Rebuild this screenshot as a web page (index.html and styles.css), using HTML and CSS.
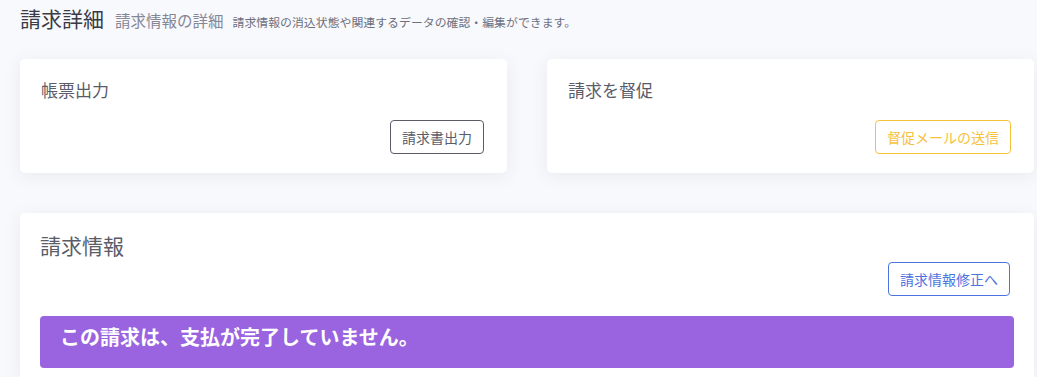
FILE: index.html
```html
<!DOCTYPE html>
<html lang="ja">

<head>
  <meta charset="UTF-8">
  <meta name="viewport" content="width=device-width, initial-scale=1.0">
  <title>請求詳細</title>
  <link rel="stylesheet" href="styles.css">
</head>

<body>
  <div class="page">
    <div class="page-head">
      <h1 class="page-title">請求詳細</h1>
      <span class="page-sub">請求情報の詳細</span>
      <span class="page-note">請求情報の消込状態や関連するデータの確認・編集ができます。</span>
    </div>

    <div class="card-row">
      <div class="card">
        <h5 class="card-title">帳票出力</h5>
        <div class="card-actions">
          <button class="btn btn-dark">請求書出力</button>
        </div>
      </div>
      <div class="card">
        <h5 class="card-title">請求を督促</h5>
        <div class="card-actions">
          <button class="btn btn-warning">督促メールの送信</button>
        </div>
      </div>
    </div>

    <div class="card card-main">
      <h4 class="card-title-lg">請求情報</h4>
      <div class="card-actions">
        <button class="btn btn-primary">請求情報修正へ</button>
      </div>
      <div class="alert-status">この請求は、支払が完了していません。</div>
    </div>
  </div>
</body>

</html>
```

FILE: styles.css
```css
body {
  margin: 0;
  font-family: "Noto Sans CJK JP", "Noto Sans", sans-serif;
  background-color: #f8f9fc;
  color: #5a5c69;
}

.page {
  padding: 0 3px 0 20px;
}

/* Header */
.page-head {
  display: flex;
  align-items: baseline;
  padding-top: 4px;
  height: 59px;
  box-sizing: border-box;
}

.page-title {
  margin: 0;
  font-size: 21px;
  font-weight: 400;
  color: #3a3b45;
  line-height: 28px;
}

.page-sub {
  margin-left: 11px;
  font-size: 15.5px;
  color: #858796;
}

.page-note {
  margin-left: 9px;
  font-size: 11.9px;
  color: #6e707e;
}

/* Cards */
.card-row {
  display: grid;
  grid-template-columns: 1fr 1fr;
  gap: 40px;
  margin-bottom: 40px;
}

.card {
  background-color: #fff;
  border-radius: 5px;
  box-shadow: 0 3px 18px 0 rgba(58, 59, 69, 0.08);
  padding: 19px 23px 19px 21px;
}

.card-title {
  margin: 0;
  font-size: 17px;
  font-weight: 400;
  line-height: 24px;
  color: #5a5c69;
}

.card-actions {
  display: flex;
  justify-content: flex-end;
  margin-top: 18px;
}

.btn {
  font-family: inherit;
  font-size: 14px;
  line-height: 20px;
  padding: 6px 11px;
  border-radius: 4px;
  background: #fff;
  cursor: pointer;
}

.btn-dark {
  border: 1px solid #5a5c69;
  color: #5a5c69;
}

.btn-warning {
  border: 1px solid #f6c23e;
  color: #f6c23e;
}

.btn-primary {
  border: 1px solid #4e73df;
  color: #4e73df;
}

/* Main card */
.card-main {
  padding: 17px 20px 9px 20px;
  border-bottom-left-radius: 0;
  border-bottom-right-radius: 0;
}

.card-title-lg {
  margin: 0;
  font-size: 21px;
  font-weight: 400;
  line-height: 30px;
  color: #5a5c69;
}

.card-main .card-actions {
  margin-top: 2px;
  margin-right: 4px;
}

.alert-status {
  margin-top: 20px;
  background-color: #9a64e0;
  color: #fff;
  border-radius: 4px;
  font-size: 20px;
  font-weight: 700;
  line-height: 30px;
  padding: 6px 20px 16px;
}
```
